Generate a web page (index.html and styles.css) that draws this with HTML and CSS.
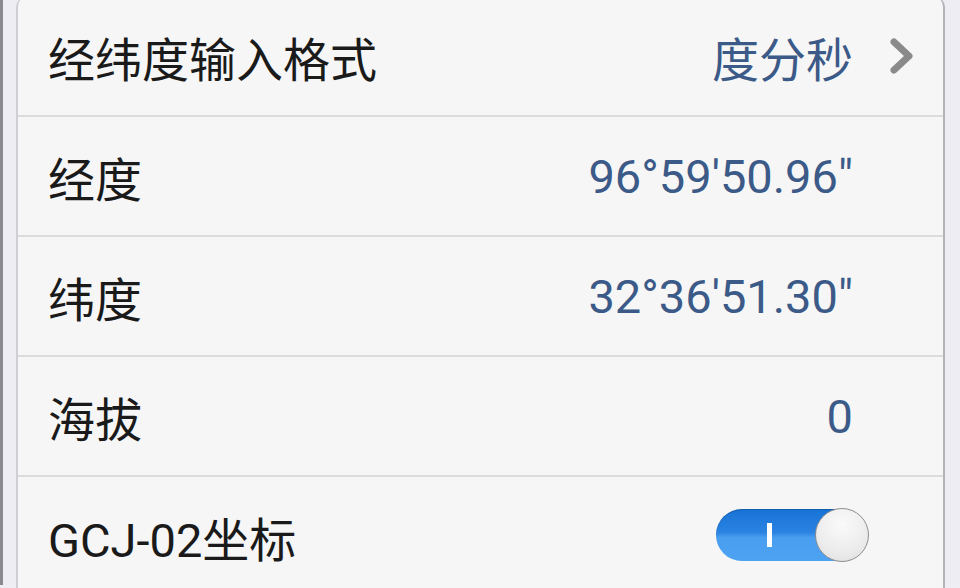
FILE: index.html
```html
<!DOCTYPE html>
<html>
<head>
<meta charset="utf-8">
<link rel="stylesheet" href="styles.css">
</head>
<body>
<div class="screen">
  <div class="card">
    <div class="row">
      <span class="label">经纬度输入格式</span>
      <span class="value">度分秒</span>
      <svg class="chev" width="30" height="40" viewBox="0 0 30 40"><path d="M7 6 L22 20 L7 34" fill="none" stroke="#8a8a8a" stroke-width="7" stroke-linecap="round" stroke-linejoin="round"/></svg>
    </div>
    <div class="row">
      <span class="label">经度</span>
      <span class="value num">96°59'50.96"</span>
      <span class="spacer"></span>
    </div>
    <div class="row">
      <span class="label">纬度</span>
      <span class="value num">32°36'51.30"</span>
      <span class="spacer"></span>
    </div>
    <div class="row">
      <span class="label">海拔</span>
      <span class="value num">0</span>
      <span class="spacer"></span>
    </div>
    <div class="row last">
      <span class="label">GCJ-02坐标</span>
      <span class="toggle"><span class="bar"></span><span class="knob"></span></span>
    </div>
  </div>
</div>
</body>
</html>
```

FILE: styles.css
```css
html, body {
  margin: 0;
  padding: 0;
  width: 960px;
  height: 588px;
  overflow: hidden;
  background: #eeeef4;
  font-family: Roboto, "Noto Sans CJK SC", sans-serif;
}
.screen {
  height: 588px;
  border-left: 3px solid #8a8a8e;
  padding-left: 13px;
  padding-right: 15px;
  box-sizing: border-box;
  background: #ededf3;
}
.card {
  margin-top: -3px;
  height: 600px;
  background: #f6f6f6;
  border-left: 2px solid #cfcfd4;
  border-right: 2px solid #b4b4b8;
  border-radius: 10px 10px 0 0;
}
.row {
  height: 118px;
  border-bottom: 2px solid #dcdcdc;
  display: flex;
  align-items: center;
  padding-left: 30px;
  padding-right: 24px;
}
.row.last { border-bottom: none; }
.label {
  font-size: 47px;
  color: #1a1a1a;
  flex: 1;
}
.value {
  font-size: 47px;
  color: #3c5a88;
}
.num {
  font-family: Roboto, sans-serif;
  font-size: 47px;
}
.chev {
  margin-left: 34px;
  margin-right: 2px;
}
.spacer {
  width: 66px;
}
.toggle {
  position: relative;
  width: 152px;
  height: 52px;
  margin-right: 51px;
  margin-top: -2px;
  border-radius: 26px;
  background: linear-gradient(#1673d6 0%, #2b83e2 45%, #4a9ef0 55%, #4da2f2 100%);
  box-shadow: inset 0 1px 1px rgba(0,0,0,0.2);
}
.bar {
  position: absolute;
  left: 51px;
  top: 14px;
  width: 5px;
  height: 24px;
  background: #fff;
}
.knob {
  position: absolute;
  right: -1px;
  top: -1px;
  width: 52px;
  height: 52px;
  border-radius: 50%;
  border: 1px solid #8f8f8f;
  background: radial-gradient(circle at 50% 30%, #fafafa 0%, #ececec 60%, #dcdcdc 100%);
}
```
